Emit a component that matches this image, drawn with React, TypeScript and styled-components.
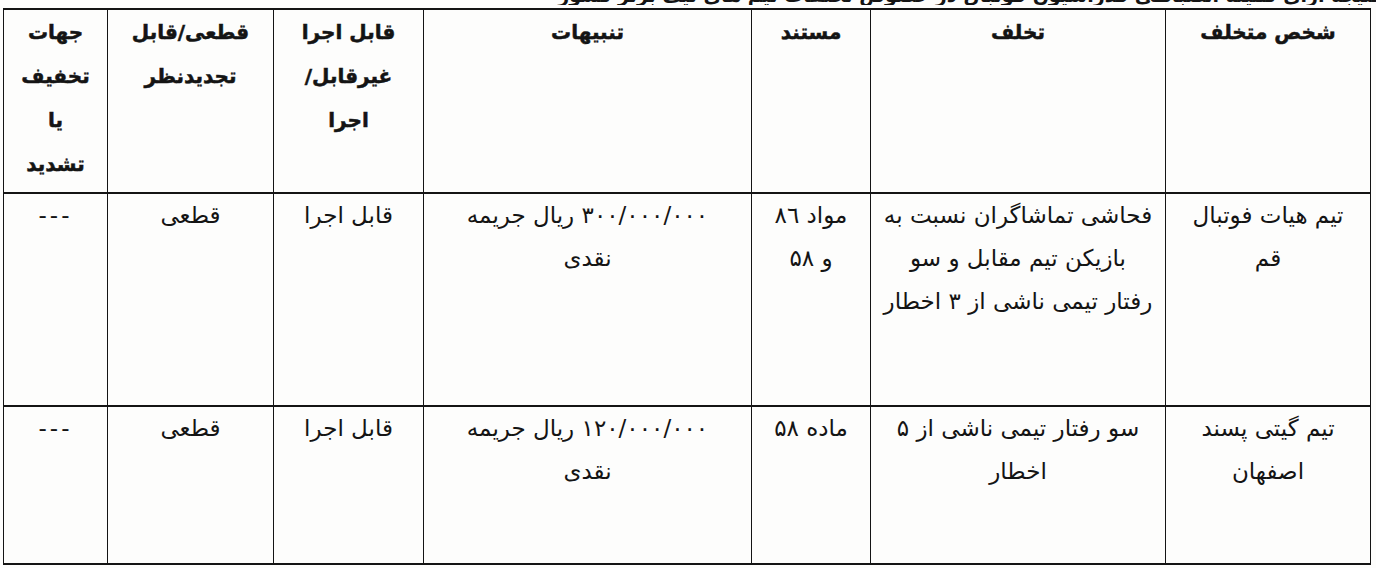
import React from "react";
import styled, { createGlobalStyle } from "styled-components";

const GlobalStyle = createGlobalStyle`
  html, body {
    margin: 0;
    padding: 0;
    background: #fdfdfc;
  }
  body {
    font-family: "DejaVu Sans", sans-serif;
    color: #141414;
  }
`;

const Page = styled.div`
  width: 1376px;
  height: 568px;
  overflow: hidden;
  box-sizing: border-box;
  padding: 0 5px 0 4px;
  direction: rtl;
`;

// the caption above the table is cut by the top edge of the scan
const Caption = styled.div`
  height: 5px;
  margin: 0 -8px 3px 0;
  overflow: hidden;
  display: flex;
  align-items: flex-end;
  white-space: nowrap;

  span {
    font-weight: bold;
    font-size: 19px;
    line-height: 1;
  }
`;

const Sheet = styled.table`
  width: 1367px;
  border-collapse: collapse;
  table-layout: fixed;
  direction: rtl;
`;

const Col = styled.col<{ $w: number }>`
  width: ${(p) => p.$w}px;
`;

const Row = styled.tr<{ $h: number }>`
  height: ${(p) => p.$h}px;
`;

const HeadCell = styled.th`
  vertical-align: top;
  text-align: center;
  font-weight: bold;
  font-size: 20px;
  line-height: 44px;
  padding: 0 4px;
  -webkit-text-stroke: 0.5px #141414;
  border: 1px solid #141414;
  border-top-width: 2px;
  border-bottom-width: 2px;
`;

const Cell = styled.td`
  vertical-align: top;
  text-align: center;
  font-size: 23px;
  line-height: 43px;
  padding: 0 6px;
  border: 1px solid #141414;
  border-top-width: 2px;
  border-bottom-width: 2px;
`;

const Line = styled.div`
  white-space: nowrap;
`;

const Dash = styled.span`
  letter-spacing: 3px;
`;

const widths = [205, 295, 119, 328, 150, 166, 104];

const head: string[][] = [
  ["شخص متخلف"],
  ["تخلف"],
  ["مستند"],
  ["تنبیهات"],
  ["قابل اجرا", "غیرقابل/", "اجرا"],
  ["قطعی/قابل", "تجدیدنظر"],
  ["جهات", "تخفیف", "یا", "تشدید"],
];

const rows: { h: number; cells: string[][] }[] = [
  {
    h: 213,
    cells: [
      ["تیم هیات فوتبال", "قم"],
      ["فحاشی تماشاگران نسبت به", "بازیکن تیم مقابل و سو", "رفتار تیمی ناشی از ۳ اخطار"],
      ["مواد ۸٦", "و ۵۸"],
      ["۳۰۰/۰۰۰/۰۰۰ ریال جریمه", "نقدی"],
      ["قابل اجرا"],
      ["قطعی"],
      ["---"],
    ],
  },
  {
    h: 158,
    cells: [
      ["تیم گیتی پسند", "اصفهان"],
      ["سو رفتار تیمی ناشی از ۵", "اخطار"],
      ["ماده ۵۸"],
      ["۱۲۰/۰۰۰/۰۰۰ ریال جریمه", "نقدی"],
      ["قابل اجرا"],
      ["قطعی"],
      ["---"],
    ],
  },
];

export default function App() {
  return (
    <>
      <GlobalStyle />
      <Page>
        <Caption>
          <span>نتیجه آرای کمیته انضباطی فدراسیون فوتبال در خصوص تخلفات تیم های لیگ برتر کشور</span>
        </Caption>
        <Sheet>
          <colgroup>
            {widths.map((w, i) => (
              <Col key={i} $w={w} />
            ))}
          </colgroup>
          <thead>
            <Row $h={184}>
              {head.map((lines, i) => (
                <HeadCell key={i}>
                  {lines.map((l, j) => (
                    <Line key={j}>{l}</Line>
                  ))}
                </HeadCell>
              ))}
            </Row>
          </thead>
          <tbody>
            {rows.map((r, i) => (
              <Row key={i} $h={r.h}>
                {r.cells.map((lines, j) => (
                  <Cell key={j}>
                    {lines.map((l, k) => (
                      <Line key={k}>{l === "---" ? <Dash>{l}</Dash> : l}</Line>
                    ))}
                  </Cell>
                ))}
              </Row>
            ))}
          </tbody>
        </Sheet>
      </Page>
    </>
  );
}
